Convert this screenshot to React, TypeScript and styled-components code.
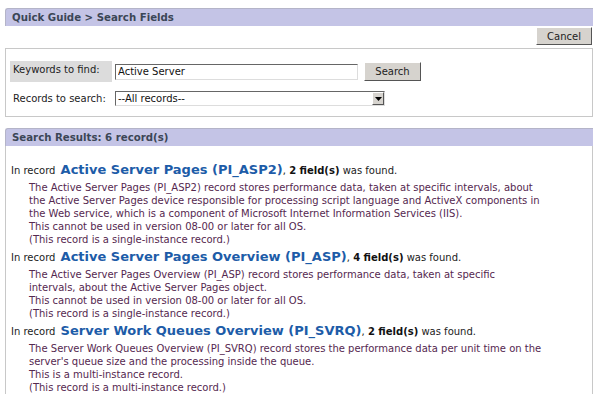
import React from "react";
import styled, { createGlobalStyle } from "styled-components";

const GlobalStyle = createGlobalStyle`
  body {
    margin: 0;
    background: #fff;
    font-family: "DejaVu Sans", Verdana, sans-serif;
    font-size: 10px;
    color: #333;
  }
`;

type Rec = {
  name: string;
  fields: number;
  lines: string[];
};

const records: Rec[] = [
  {
    name: "Active Server Pages (PI_ASP2)",
    fields: 2,
    lines: [
      "The Active Server Pages (PI_ASP2) record stores performance data, taken at specific intervals, about",
      "the Active Server Pages device responsible for processing script language and ActiveX components in",
      "the Web service, which is a component of Microsoft Internet Information Services (IIS).",
      "This cannot be used in version 08-00 or later for all OS.",
      "(This record is a single-instance record.)",
    ],
  },
  {
    name: "Active Server Pages Overview (PI_ASP)",
    fields: 4,
    lines: [
      "The Active Server Pages Overview (PI_ASP) record stores performance data, taken at specific",
      "intervals, about the Active Server Pages object.",
      "This cannot be used in version 08-00 or later for all OS.",
      "(This record is a single-instance record.)",
    ],
  },
  {
    name: "Server Work Queues Overview (PI_SVRQ)",
    fields: 2,
    lines: [
      "The Server Work Queues Overview (PI_SVRQ) record stores the performance data per unit time on the",
      "server's queue size and the processing inside the queue.",
      "This is a multi-instance record.",
      "(This record is a multi-instance record.)",
    ],
  },
];

const App = () => (
  <>
    <GlobalStyle />
    <Page>
      <SectionBar>Quick Guide &gt; Search Fields</SectionBar>
      <Actions>
        <Button>Cancel</Button>
      </Actions>
      <SearchPanel>
        <FormRow>
          <Label shaded>Keywords to find:</Label>
          <TextInput defaultValue="Active Server" />
          <SearchButton>Search</SearchButton>
        </FormRow>
        <FormRow>
          <Label>Records to search:</Label>
          <Select>
            <span>--All records--</span>
            <Arrow>
              <svg width="7" height="4" viewBox="0 0 7 4">
                <path d="M0 0h7L3.5 4z" fill="#000" />
              </svg>
            </Arrow>
          </Select>
        </FormRow>
      </SearchPanel>
      <SectionBar>Search Results: 6 record(s)</SectionBar>
      <Results>
        {records.map((r) => (
          <Record key={r.name}>
            <RecordHead>
              In record <RecordLink>{r.name}</RecordLink>,{" "}
              <b>{r.fields} field(s)</b> was found.
            </RecordHead>
            <Desc>
              {r.lines.map((l) => (
                <div key={l}>{l}</div>
              ))}
            </Desc>
          </Record>
        ))}
      </Results>
    </Page>
  </>
);

const Page = styled.div`
  padding: 8px 7px 0 5px;
`;

const SectionBar = styled.div`
  height: 17px;
  line-height: 18px;
  background: #c4c4e6;
  border-top: 1px solid #b4b4c8;
  border-left: 1px solid #b4b4c8;
  border-radius: 3px 0 0 0;
  padding-left: 6px;
  font-size: 10.2px;
  font-weight: bold;
  color: #3b4656;
`;

const Actions = styled.div`
  display: flex;
  justify-content: flex-end;
  padding: 1px 1px 3px 0;
`;

const Button = styled.button`
  height: 18px;
  padding: 0 10px;
  background: #d6d3ce;
  border: 1px solid;
  border-color: #fff #555 #555 #fff;
  font-family: "DejaVu Sans", Verdana, sans-serif;
  font-size: 10px;
  color: #222;
`;

const SearchButton = styled(Button)`
  margin-left: 6px;
  width: 57px;
  height: 19px;
`;

const SearchPanel = styled.div`
  border: 1px solid #c8c8c8;
  padding: 12px 4px 10px 4px;
  display: flex;
  flex-direction: column;
  gap: 9px;
  margin-bottom: 11px;
`;

const FormRow = styled.div`
  display: flex;
  align-items: center;
`;

const Label = styled.div<{ shaded?: boolean }>`
  width: 102px;
  height: ${(p) => (p.shaded ? "21px" : "auto")};
  padding: ${(p) => (p.shaded ? "3px 0 0 3px" : "0 0 0 3px")};
  box-sizing: border-box;
  align-self: ${(p) => (p.shaded ? "stretch" : "center")};
  background: ${(p) => (p.shaded ? "#dcdcdc" : "transparent")};
  font-size: 10px;
  color: #222;
`;

const TextInput = styled.input`
  margin-left: 3px;
  width: 243px;
  height: 16px;
  box-sizing: border-box;
  border: 1px solid;
  border-color: #666 #ddd #ddd #666;
  padding: 0 2px;
  font-family: "DejaVu Sans", Verdana, sans-serif;
  font-size: 10px;
  color: #111;
  outline: none;
`;

const Select = styled.div`
  margin-left: 3px;
  width: 270px;
  height: 15px;
  box-sizing: border-box;
  border: 1px solid;
  border-color: #666 #ddd #ddd #666;
  display: flex;
  align-items: center;
  justify-content: space-between;
  padding-left: 2px;
  font-size: 10px;
  color: #111;
`;

const Arrow = styled.div`
  width: 12px;
  height: 13px;
  box-sizing: border-box;
  background: #d6d3ce;
  border: 1px solid;
  border-color: #fff #555 #555 #fff;
  display: flex;
  align-items: center;
  justify-content: center;
`;

const Results = styled.div`
  border-left: 1px solid #c8c8c8;
  border-right: 1px solid #c8c8c8;
  padding: 15px 5px 0 5px;
  display: flex;
  flex-direction: column;
  gap: 2px;
`;

const Record = styled.div``;

const RecordHead = styled.div`
  font-size: 10px;
  color: #222;
  line-height: 17px;
  margin-bottom: 2px;
  b {
    color: #111;
  }
`;

const RecordLink = styled.span`
  margin-left: 2px;
  font-size: 13px;
  font-weight: bold;
  color: #1d5ca8;
`;

const Desc = styled.div`
  padding-left: 18px;
  font-size: 10px;
  line-height: 13px;
  color: #55284f;
`;

export default App;
